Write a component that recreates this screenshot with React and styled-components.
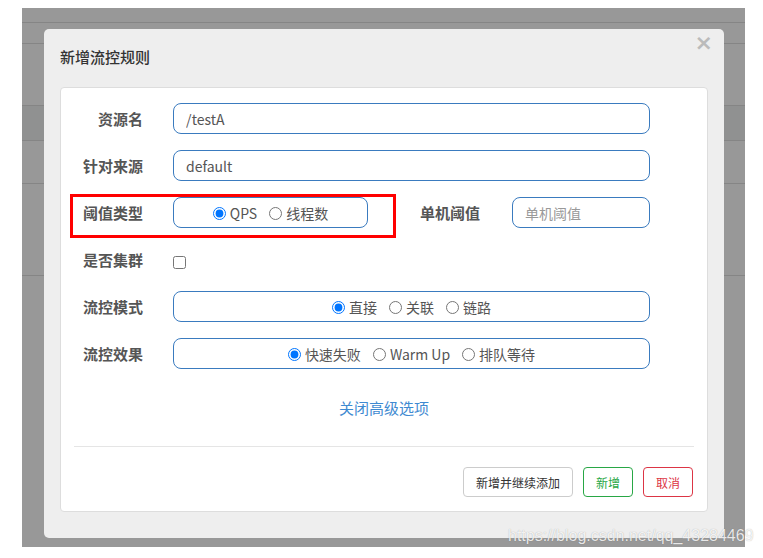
import React from "react";
import styled, { createGlobalStyle } from "styled-components";

const GlobalStyle = createGlobalStyle`
  body {
    margin: 0;
    background: #fff;
    font-family: "Noto Sans CJK SC", "Noto Sans", sans-serif;
  }
`;

const Page = styled.div`
  position: relative;
  width: 763px;
  height: 558px;
  padding: 8px 18px 0 22px;
  box-sizing: border-box;
  overflow: hidden;
`;

const Backdrop = styled.div`
  position: relative;
  height: 539px;
  background: #989898;
`;

const BgRow = styled.div`
  height: ${(p) => p.h}px;
  border-bottom: 1px solid #858585;
  background: ${(p) => (p.dark ? "#909191" : "transparent")};
`;

const Modal = styled.div`
  position: absolute;
  left: 22px;
  top: 21px;
  width: 680px;
  height: 509px;
  background: #eee;
  border-radius: 5px;
  display: flex;
  flex-direction: column;
`;

const Header = styled.div`
  height: 54px;
  padding: 0 11px 0 16px;
  display: flex;
  justify-content: space-between;
`;

const Title = styled.h4`
  margin: 0;
  align-self: center;
  font-size: 15px;
  font-weight: 500;
  color: #333;
`;

const Close = styled.span`
  margin-top: 3px;
  font-family: "DejaVu Sans", sans-serif;
  font-size: 22px;
  font-weight: bold;
  color: #bbb;
  line-height: 1;
`;

const Panel = styled.div`
  margin: 4px 16px 0;
  height: 425px;
  box-sizing: border-box;
  background: #fff;
  border: 1px solid #ddd;
  border-radius: 4px;
  padding: 15px 0 0;
  position: relative;
  display: flex;
  flex-direction: column;
`;

const Form = styled.div`
  display: flex;
  flex-direction: column;
  gap: 16px;
  padding-right: 57px;
`;

const Row = styled.div`
  display: flex;
  align-items: center;
  height: 31px;
`;

const Label = styled.label`
  width: ${(p) => p.w || 82}px;
  margin-right: 30px;
  text-align: right;
  font-size: 15px;
  font-weight: bold;
  color: #555;
  flex-shrink: 0;
  white-space: nowrap;
`;

const Input = styled.input`
  flex: ${(p) => (p.w ? "none" : 1)};
  width: ${(p) => (p.w ? `${p.w}px` : "auto")};
  height: 31px;
  box-sizing: border-box;
  border: 1px solid #3a7bbf;
  border-radius: 8px;
  padding: 0 12px;
  font-family: inherit;
  font-size: 14px;
  color: #555;
  outline: none;
  &::placeholder {
    color: #999;
  }
`;

const RadioBox = styled.div`
  flex: ${(p) => (p.w ? "none" : 1)};
  width: ${(p) => (p.w ? `${p.w}px` : "auto")};
  height: 31px;
  box-sizing: border-box;
  border: 1px solid #3a7bbf;
  border-radius: 8px;
  display: flex;
  justify-content: center;
  align-items: center;
  gap: 12px;
  padding-top: 1px;
`;

const Option = styled.label`
  display: flex;
  align-items: center;
  font-size: 14px;
  color: #555;
  input {
    margin: 0 4px 0 0;
    width: 13px;
    height: 13px;
  }
`;

const SubLabel = styled(Label)`
  margin-left: 52px;
  text-align: left;
`;

const Check = styled.input`
  margin: 6px 0 0;
  width: 13px;
  height: 13px;
`;

const Highlight = styled.div`
  position: absolute;
  left: 9px;
  top: 106px;
  width: 326px;
  height: 44px;
  box-sizing: border-box;
  border: 3px solid #f00;
  pointer-events: none;
`;

const Toggle = styled.a`
  margin-top: 28px;
  align-self: center;
  line-height: 22px;
  font-size: 15px;
  color: #3f8ad1;
  text-decoration: none;
`;

const Divider = styled.hr`
  margin: 27px 13px 0;
  border: 0;
  border-top: 1px solid #e5e5e5;
`;

const Footer = styled.div`
  margin-top: 20px;
  padding-right: 14px;
  display: flex;
  justify-content: flex-end;
  gap: 10px;
`;

const Button = styled.button`
  height: 30px;
  padding: 0 12px;
  background: #fff;
  border: 1px solid ${(p) => p.color || "#ccc"};
  color: ${(p) => p.text || "#333"};
  border-radius: 4px;
  font-family: inherit;
  font-size: 12px;
`;

const Watermark = styled.div`
  position: absolute;
  left: 508px;
  top: 527px;
  font-family: "Liberation Sans", sans-serif;
  font-size: 16px;
  color: rgba(255, 255, 255, 0.85);
  text-shadow: 0 0 1px rgba(0, 0, 0, 0.3);
  white-space: nowrap;
`;

const Radio = ({ name, label, checked }) => (
  <Option>
    <input type="radio" name={name} defaultChecked={checked} />
    {label}
  </Option>
);

export default function App() {
  return (
    <Page>
      <GlobalStyle />
      <Backdrop>
        <BgRow h={14} />
        <BgRow h={20} />
        <BgRow h={61} />
        <BgRow h={34} dark />
        <BgRow h={42} />
        <BgRow h={91} />
        <Modal>
          <Header>
            <Title>新增流控规则</Title>
            <Close>×</Close>
          </Header>
          <Panel>
            <Form>
              <Row>
                <Label>资源名</Label>
                <Input defaultValue="/testA" />
              </Row>
              <Row>
                <Label>针对来源</Label>
                <Input defaultValue="default" />
              </Row>
              <Row>
                <Label>阈值类型</Label>
                <RadioBox w={195}>
                  <Radio name="grade" label="QPS" checked />
                  <Radio name="grade" label="线程数" />
                </RadioBox>
                <SubLabel w={62}>单机阈值</SubLabel>
                <Input w={138} placeholder="单机阈值" />
              </Row>
              <Row>
                <Label>是否集群</Label>
                <Check type="checkbox" />
              </Row>
              <Row>
                <Label>流控模式</Label>
                <RadioBox>
                  <Radio name="strategy" label="直接" checked />
                  <Radio name="strategy" label="关联" />
                  <Radio name="strategy" label="链路" />
                </RadioBox>
              </Row>
              <Row>
                <Label>流控效果</Label>
                <RadioBox>
                  <Radio name="behavior" label="快速失败" checked />
                  <Radio name="behavior" label="Warm Up" />
                  <Radio name="behavior" label="排队等待" />
                </RadioBox>
              </Row>
            </Form>
            <Toggle>关闭高级选项</Toggle>
            <Divider />
            <Footer>
              <Button>新增并继续添加</Button>
              <Button color="#28a745" text="#28a745">新增</Button>
              <Button color="#dc3545" text="#dc3545">取消</Button>
            </Footer>
            <Highlight />
          </Panel>
        </Modal>
      </Backdrop>
      <Watermark>https://blog.csdn.net/qq_43284469</Watermark>
    </Page>
  );
}
